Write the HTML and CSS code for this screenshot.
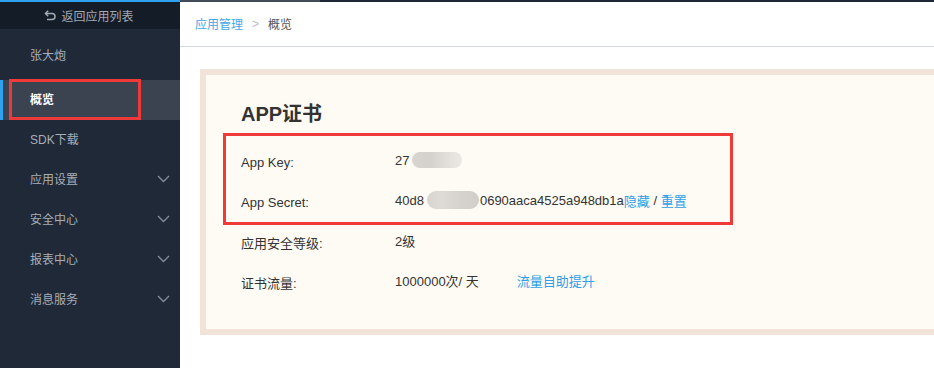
FILE: index.html
```html
<!DOCTYPE html>
<html lang="zh">
<head>
<meta charset="utf-8">
<title>概览</title>
<link rel="stylesheet" href="styles.css">
</head>
<body>
<div class="topstrip"><span class="seg-blue"></span><span class="seg-gray"></span><span class="seg-dark"></span></div>
<div class="layout">
  <aside class="sidebar">
    <div class="side-head">
      <svg class="back-icon" width="12" height="11" viewBox="0 0 12 11" fill="none" stroke="#a3aab5" stroke-width="1.5"><path d="M1.5 3.5 H8 a3 3 0 0 1 0 6 H3"/><path d="M4.2 0.8 L1.5 3.5 L4.2 6.2"/></svg>
      <span>返回应用列表</span>
    </div>
    <nav class="side-nav">
      <div class="nav-item nav-app">张大炮</div>
      <div class="nav-item active">概览<span class="mark mark-side"></span></div>
      <div class="nav-item">SDK下载</div>
      <div class="nav-item">应用设置<svg class="chev" width="13" height="8" viewBox="0 0 13 8" fill="none" stroke="#858c98" stroke-width="1.4"><path d="M1 1 L6.5 6.5 L12 1"/></svg></div>
      <div class="nav-item">安全中心<svg class="chev" width="13" height="8" viewBox="0 0 13 8" fill="none" stroke="#858c98" stroke-width="1.4"><path d="M1 1 L6.5 6.5 L12 1"/></svg></div>
      <div class="nav-item">报表中心<svg class="chev" width="13" height="8" viewBox="0 0 13 8" fill="none" stroke="#858c98" stroke-width="1.4"><path d="M1 1 L6.5 6.5 L12 1"/></svg></div>
      <div class="nav-item">消息服务<svg class="chev" width="13" height="8" viewBox="0 0 13 8" fill="none" stroke="#858c98" stroke-width="1.4"><path d="M1 1 L6.5 6.5 L12 1"/></svg></div>
    </nav>
  </aside>
  <main class="main">
    <div class="crumbs">
      <a class="crumb-link">应用管理</a>
      <span class="crumb-sep">&gt;</span>
      <span class="crumb-cur">概览</span>
    </div>
    <section class="card">
      <div class="card-inner">
        <h2 class="card-title">APP证书</h2>
        <div class="keys">
          <span class="mark mark-keys"></span>
          <div class="row">
            <div class="label">App Key:</div>
            <div class="value">27<span class="blur blur-key"></span></div>
          </div>
          <div class="row">
            <div class="label">App Secret:</div>
            <div class="value">40d8<span class="blur blur-secret"></span>0690aaca4525a948db1a<a class="link">隐藏</a> / <a class="link">重置</a></div>
          </div>
        </div>
        <div class="row">
          <div class="label">应用安全等级:</div>
          <div class="value">2级</div>
        </div>
        <div class="row">
          <div class="label">证书流量:</div>
          <div class="value">1000000次/ 天<a class="link link-gap">流量自助提升</a></div>
        </div>
      </div>
    </section>
  </main>
</div>
</body>
</html>
```

FILE: styles.css
```css
* { box-sizing: border-box; }
html, body { margin: 0; padding: 0; }
body {
  width: 934px;
  height: 368px;
  overflow: hidden;
  font-family: "Liberation Sans", "Noto Sans CJK SC", sans-serif;
  background: #ffffff;
  color: #333;
}
.topstrip { display: flex; height: 2px; }
.seg-blue { width: 180px; background: #2ea1ef; }
.seg-gray { width: 140px; background: #434b59; }
.seg-dark { flex: 1; background: #1e2735; }

.layout { display: flex; height: 366px; }

.sidebar {
  width: 180px;
  flex: none;
  background: #1f2937;
  color: #a7aeb9;
  font-size: 12px;
}
.side-head {
  height: 27px;
  background: #141c28;
  display: flex;
  align-items: center;
  justify-content: center;
  gap: 5px;
  color: #a3aab5;
  padding-right: 2px;
}
.back-icon { display: block; }
.side-nav { display: flex; flex-direction: column; }
.nav-item {
  position: relative;
  height: 40px;
  line-height: 40px;
  padding-left: 30px;
  display: flex;
  align-items: center;
  justify-content: space-between;
  padding-right: 10px;
}
.nav-app { height: 51px; padding-top: 2px; }
.nav-item.active {
  background: #3b4250;
  color: #ffffff;
  font-weight: bold;
  border-left: 3px solid #2ea1ef;
  padding-left: 27px;
}
.chev { display: block; margin-top: -2px; }

.mark {
  position: absolute;
  border: 3px solid #f03a3a;
  pointer-events: none;
}
.mark-side { left: 6px; top: -1px; width: 132px; height: 41px; }

.main { flex: 1; overflow: hidden; }
.crumbs {
  height: 45px;
  border-bottom: 1px solid #d3dae5;
  display: flex;
  align-items: center;
  padding-left: 15px;
  padding-bottom: 1px;
  font-size: 12px;
}
.crumb-link { color: #45a6e6; }
.crumb-sep { color: #b9bec6; margin: 0 9px; }
.crumb-cur { color: #555; }

.card {
  margin: 22px -30px 0 20px;
  border: 6px solid #f1e3d7;
  background: #fefbf4;
}
.card-inner {
  padding: 24px 0 27px 35px;
  font-size: 13px;
}
.card-title {
  margin: 0 0 13px 0;
  font-size: 20px;
  line-height: 30px;
  font-weight: bold;
  color: #333;
}
.keys { position: relative; }
.mark-keys { left: -18px; top: -9px; width: 510px; height: 92px; }
.row { display: flex; align-items: center; height: 40px; }
.label { width: 154px; color: #333; }
.value { color: #333; padding-bottom: 4px; display: flex; align-items: center; white-space: pre; }
.link { color: #2d9ee8; }
.link-gap { margin-left: 38px; }
.blur {
  display: inline-block;
  border-radius: 9px;
  background: linear-gradient(90deg, #d9d6d1 0%, #d4d1cc 35%, #dcd9d4 55%, #e6e3de 80%, #ebe8e3 100%);
}
.blur-key { width: 50px; height: 16px; margin-left: 3px; }
.blur-secret { width: 52px; height: 18px; margin-left: 3px; margin-right: 1px; background: linear-gradient(90deg, #d9d6d1 0%, #dedbd6 30%, #d6d3ce 60%, #d2cfca 100%); }
```
